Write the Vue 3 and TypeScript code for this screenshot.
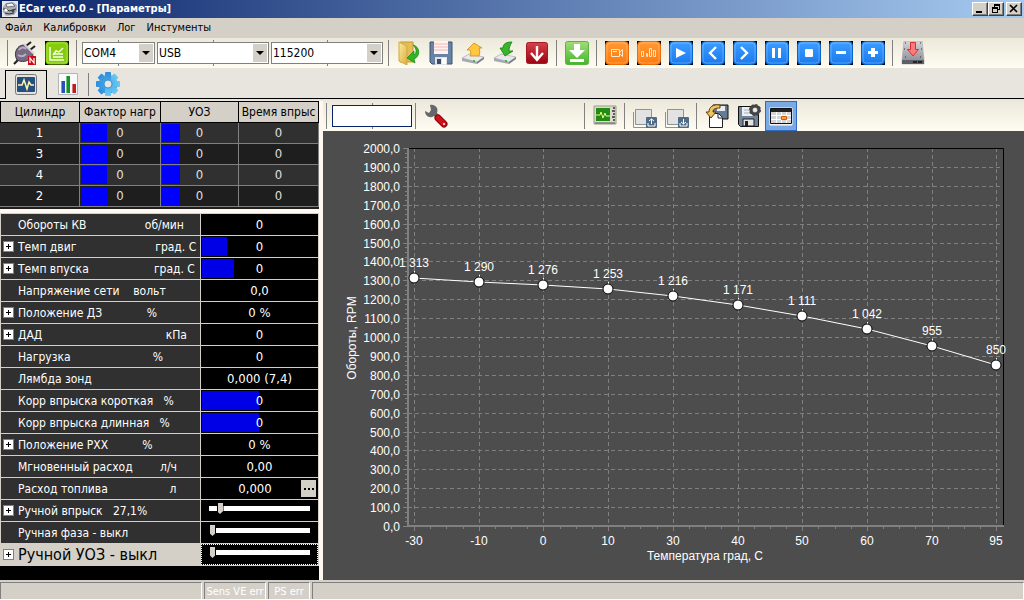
<script setup lang="ts">
import { ref } from 'vue'

interface Param {
  name: string
  expand?: boolean
  value?: string
  bar?: number
  slider?: number
  more?: boolean
}

const menu = ['Файл', 'Калибровки', 'Лог', 'Инстументы']

const port = ref('COM4')
const link = ref('USB')
const baud = ref('115200')
const query = ref('')

const cylinders = ['1', '3', '4', '2']

const params = ref<Param[]>([
  { name: 'Обороты КВ                 об/мин', value: '0' },
  { name: 'Темп двиг                       град. C', expand: true, value: '0', bar: 21 },
  { name: 'Темп впуска                   град. C', expand: true, value: '0', bar: 27 },
  { name: 'Напряжение сети    вольт', value: '0,0' },
  { name: 'Положение ДЗ             %', expand: true, value: '0 %' },
  { name: 'ДАД                                    кПа', expand: true, value: '0' },
  { name: 'Нагрузка                        %', value: '0' },
  { name: 'Лямбда зонд', value: '0,000 (7,4)' },
  { name: 'Корр впрыска короткая   %', value: '0', bar: 49 },
  { name: 'Корр впрыска длинная   %', value: '0', bar: 49 },
  { name: 'Положение РХХ          %', expand: true, value: '0 %' },
  { name: 'Мгновенный расход        л/ч', value: '0,00' },
  { name: 'Расход топлива                  л', value: '0,000', more: true },
  { name: 'Ручной впрыск   27,1%', expand: true, slider: 8 },
  { name: 'Ручная фаза - выкл', slider: 0 },
  { name: 'Ручной УОЗ - выкл', expand: true, slider: 0 },
])

/* chart geometry */
const L = 85
const R = 680
const T = 17
const B = 395
const x0 = 91
const step = 64.7
const temps = [-30, -10, 0, 10, 30, 40, 50, 60, 70, 95]
const rpm = [1313, 1290, 1276, 1253, 1216, 1171, 1111, 1042, 955, 850]
const px = (i: number) => Math.round(x0 + i * step)
const py = (v: number) => Math.round(B - (v * (B - T)) / 2000)
const levels = Array.from({ length: 21 }, (_, i) => i * 100)
const minorY = Array.from({ length: 80 }, (_, i) => i * 25)
const minorX = Array.from({ length: 37 }, (_, i) => Math.round(x0 + (i * step) / 4))
const fmt = (v: number) => (v >= 1000 ? `1 ${String(v - 1000).padStart(3, '0')}` : String(v))
const line = rpm.map((v, i) => `${px(i)},${py(v)}`).join(' ')

const media = [
  { id: 'video', label: 'Видео' },
  { id: 'stats', label: 'График' },
  { id: 'play', label: 'Пуск' },
  { id: 'prev', label: 'Назад' },
  { id: 'next', label: 'Вперёд' },
  { id: 'pause', label: 'Пауза' },
  { id: 'stop', label: 'Стоп' },
  { id: 'minus', label: 'Меньше' },
  { id: 'plus', label: 'Больше' },
]
</script>

<template>
  <div class="app">
    <svg class="defs" aria-hidden="true">
      <defs>
        <linearGradient id="gBlue" x1="0" y1="0" x2="0" y2="1"><stop offset="0" stop-color="#3e9dff" /><stop offset="1" stop-color="#187bee" /></linearGradient>
        <linearGradient id="gOrange" x1="0" y1="0" x2="0" y2="1"><stop offset="0" stop-color="#ff9a35" /><stop offset="1" stop-color="#ff7a0c" /></linearGradient>
        <linearGradient id="gGreen" x1="0" y1="0" x2="0" y2="1"><stop offset="0" stop-color="#a2dc7a" /><stop offset="1" stop-color="#45b52c" /></linearGradient>
        <linearGradient id="gRed" x1="0" y1="0" x2="0" y2="1"><stop offset="0" stop-color="#d8404a" /><stop offset="1" stop-color="#9a0310" /></linearGradient>
        <linearGradient id="gSteel" x1="0" y1="0" x2="0" y2="1"><stop offset="0" stop-color="#d5d5da" /><stop offset="1" stop-color="#85868e" /></linearGradient>
        <linearGradient id="gFolder" x1="0" y1="0" x2="1" y2="1"><stop offset="0" stop-color="#fbeaa0" /><stop offset="1" stop-color="#dcae3e" /></linearGradient>
        <linearGradient id="gSky" x1="0" y1="0" x2="0" y2="1"><stop offset="0" stop-color="#6cc8f4" /><stop offset="1" stop-color="#2b8ede" /></linearGradient>
      </defs>
    </svg>

    <header class="title">
      <svg class="logo" viewBox="0 0 16 16">
        <path d="M0 0h16v16H0z" fill="#e6e8ec" />
        <path d="M1 6 4 2l7-1 4 3v6l-3 4-8 1-3-4z" fill="#a9adb5" />
        <path d="M4 3l6-1 3 3-8 1z" fill="#f5f5f5" stroke="#555" stroke-width=".7" />
        <path d="M1 8h4l2 2 7-2M3 12l4 1 5-1" stroke="#333" fill="none" />
        <circle cx="4" cy="9" r="1.5" fill="#fff" /><circle cx="11" cy="10" r="1.5" fill="#444" />
      </svg>
      <h1>ECar ver.0.0 - [Параметры]</h1>
      <div class="win">
        <button aria-label="Свернуть"><svg viewBox="0 0 14 12"><path d="M3 8h6v2H3z" /></svg></button>
        <button aria-label="Восстановить"><svg viewBox="0 0 14 12"><path d="M5 1h6v6H9V6h1V3H6v1H5zM3 4h6v6H3zm1 2v3h4V6z" fill-rule="evenodd" /></svg></button>
        <button class="close" aria-label="Закрыть"><svg viewBox="0 0 14 12"><path d="M3 2l7 7M10 2 3 9" stroke="#000" stroke-width="1.7" /></svg></button>
      </div>
    </header>

    <nav class="menu">
      <button v-for="m in menu" :key="m">{{ m }}</button>
    </nav>

    <div class="bar">
      <i class="sep grip"></i>
      <button class="tool" aria-label="Подключение">
        <svg viewBox="0 0 24 24">
          <path d="M1 23l4-4M13 5l5-4M17 9l5-4" stroke="#262428" stroke-width="2.2" />
          <path d="M4 19C0 12 4 4 11 4l9 9c0 5-9 10-16 6z" fill="#776b83" stroke="#3c3443" />
          <path d="M6 9c2-3 5-3 7-1M5 14c3 2 6 1 8-1" stroke="#b9adc4" stroke-width="2" fill="none" />
          <path d="M11 3l10 10" stroke="#d5d0da" stroke-width="2" />
          <path d="M15 15h8v9h-8z" fill="#d20a14" />
          <path d="M17 22v-5l4 5v-5" stroke="#fff" stroke-width="1.2" fill="none" />
        </svg>
      </button>
      <button class="tool" aria-label="Графики">
        <svg viewBox="0 0 24 24">
          <path d="M0 0h24v24H0z" /><rect x=".5" y=".5" width="23" height="23" rx="4" fill="#86cc0e" />
          <rect x="2" y="2" width="20" height="20" rx="3" fill="none" stroke="#a6e03c" />
          <path d="M5 6v13h14M8 16h10M8 13h10M8 14l3-4 3 1 4-4" stroke="#f8ffe8" stroke-width="1.5" fill="none" />
        </svg>
      </button>
      <i class="sep"></i>
      <span class="combo port"><select v-model="port" aria-label="Порт"><option>COM4</option></select></span>
      <span class="combo"><select v-model="link" aria-label="Интерфейс"><option>USB</option></select></span>
      <span class="combo"><select v-model="baud" aria-label="Скорость"><option>115200</option></select></span>
      <i class="sep"></i>
      <button class="tool" aria-label="Открыть">
        <svg viewBox="0 0 24 24">
          <path d="M3 1h13v20H3z" fill="#e3bd55" stroke="#c59a31" /><path d="M2 1l8 4v19l-8-4z" fill="url(#gFolder)" stroke="#d3a93e" />
          <path d="M16 4c8 2 7 12 1 14l1 4-8-5 7-7v4c3-2 3-6-1-10z" fill="#31b522" stroke="#148512" stroke-width=".7" />
        </svg>
      </button>
      <button class="tool" aria-label="Сохранить">
        <svg viewBox="0 0 24 24">
          <path d="M1 1h22v22H3l-2-2z" fill="#6783a6" stroke="#3f546e" />
          <path d="M5 0h14v13H5z" fill="#fff2ef" /><path d="M5 3h14M5 6h14M5 9h14" stroke="#f3b8b2" />
          <path d="M6 16h12v8H6z" fill="#dfe3e8" /><path d="M8 18h4v5H8z" fill="#3c4d63" /><path d="M13 17h4v6h-4z" fill="#fff" />
        </svg>
      </button>
      <button class="tool" aria-label="Считать">
        <svg viewBox="0 0 24 24">
          <path d="M1 17l7-4 15 3-7 5z" fill="#e8e9ed" stroke="#a9abb4" stroke-width=".7" /><path d="M1 17l15 4v2L1 20z" fill="#a6a8b2" /><path d="M16 21l7-5v2l-7 5z" fill="#777a86" />
          <path d="M12 20h2" stroke="#38c22c" stroke-width="2" />
          <path d="M9 15c1-2 1-4 0-6H6l7-7 8 5h-3c1 3 1 5 0 8z" fill="#ffc73e" stroke="#c98a16" stroke-width=".8" />
        </svg>
      </button>
      <button class="tool" aria-label="Записать">
        <svg viewBox="0 0 24 24">
          <path d="M1 17l7-4 15 3-7 5z" fill="#e8e9ed" stroke="#a9abb4" stroke-width=".7" /><path d="M1 17l15 4v2L1 20z" fill="#a6a8b2" /><path d="M16 21l7-5v2l-7 5z" fill="#777a86" />
          <path d="M12 20h2" stroke="#38c22c" stroke-width="2" />
          <path d="M19 1c-6 0-9 2-9 6H7l5 8 8-5h-4c0-3 1-6 3-9z" fill="#38b52b" stroke="#147f13" stroke-width=".8" />
        </svg>
      </button>
      <button class="tool" aria-label="Загрузить">
        <svg viewBox="0 0 24 24"><rect x="1.500" y="1.500" width="21" height="21" rx="2" fill="url(#gRed)" stroke="#a51824" /><path d="M12 5v14M6 12l6 7 6-7" stroke="#fff" stroke-width="2.400" fill="none" /></svg>
      </button>
      <i class="sep"></i>
      <button class="tool" aria-label="Скачать">
        <svg viewBox="0 0 24 24"><rect x=".5" y=".5" width="23" height="23" rx="2" fill="url(#gGreen)" stroke="#55b53c" /><path d="M9 3h6v6h5l-8 8-8-8h5zM5 18h14v3H5z" fill="#fff" /></svg>
      </button>
      <i class="sep"></i>
      <button v-for="m in media" :key="m.id" class="tool" :aria-label="m.label">
        <svg viewBox="0 0 24 24">
          <path d="M0 0h24v24H0z" />
          <rect x=".5" y=".5" width="23" height="23" rx="4" :fill="m.id === 'video' || m.id === 'stats' ? 'url(#gOrange)' : 'url(#gBlue)'" :stroke="m.id === 'video' || m.id === 'stats' ? '#ee6c08' : '#0c63c8'" />
          <rect x="2" y="2" width="20" height="20" rx="3" fill="none" stroke="#fff" stroke-opacity=".25" />
          <path v-if="m.id === 'video'" d="M6.500 8.500h8v7h-8zM14.500 11.500l3-3v7l-3-3M8 10.500h4" stroke="#ffe9d0" fill="none" />
          <path v-else-if="m.id === 'stats'" d="M4.500 15.500v-5h2v5zM9.500 15.500v-3h1v3zM12.500 15.500v-8h2v8zM18.500 9.500h-2v6h2z" stroke="#ffe1c0" fill="none" />
          <path v-else-if="m.id === 'play'" d="M7 7l10 5-10 5z" fill="#fff" />
          <path v-else-if="m.id === 'prev'" d="M15 6l-6 6 6 6" stroke="#fff" stroke-width="2.4" fill="none" />
          <path v-else-if="m.id === 'next'" d="M8 6l6 6-6 6" stroke="#fff" stroke-width="2.4" fill="none" />
          <path v-else-if="m.id === 'pause'" d="M7 7h3v10H7zM13 7h3v10h-3z" fill="#fff" />
          <rect v-else-if="m.id === 'stop'" x="8" y="8" width="8" height="8" rx="1" fill="#fff" />
          <path v-else-if="m.id === 'minus'" d="M7 10h10v3H7z" fill="#fff" />
          <path v-else d="M7 10h3V7h4v3h3v3h-3v3h-4v-3H7z" fill="#fff" />
        </svg>
      </button>
      <i class="sep"></i>
      <button class="tool" aria-label="Запись во флеш">
        <svg viewBox="0 0 24 24">
          <path d="M3 0h18l2 19v4H1v-4z" fill="url(#gSteel)" stroke="#a4a4a8" stroke-width=".6" /><path d="M1 19h22v4H1z" fill="#5d5f68" />
          <path d="M12 21h9" stroke="#111" stroke-width="1.500" stroke-dasharray="4 1" /><path d="M3 8h1M20 8h1M4 16h1M19 16h1M4 2h1M19 2h1" stroke="#333" />
          <path d="M9.500 1.500h5v7h3l-5.500 6.500-5.500-6.500h3z" fill="#ff7a7a" stroke="#d83030" />
        </svg>
      </button>
    </div>

    <div class="tabs">
      <button class="tab on" aria-label="Параметры">
        <svg viewBox="0 0 22 22"><rect x=".5" y=".5" width="21" height="20" rx="2" fill="#e2e2de" stroke="#777" /><rect x="2" y="3" width="18" height="15" rx="1" fill="#244f7e" /><path d="M3 11h4l2-5 3 9 2-7 2 3h3" stroke="#fff7b0" stroke-width="1.500" fill="none" /></svg>
      </button>
      <button class="tab" aria-label="Диаграмма">
        <svg viewBox="0 0 22 22"><path d="M1.500.5h19v21h-19z" fill="#fafafa" stroke="#b4b4b4" /><path d="M4 8h4v12H4z" fill="#2852b8" /><path d="M9 3h4v17H9z" fill="#159326" /><path d="M15 11h4v9h-4z" fill="#c01c24" /><path d="M4 8h1v12H4zM9 3h1v17H9zM15 11h1v9h-1z" fill="#fff" opacity=".4" /></svg>
      </button>
      <i class="sep"></i>
      <button class="tab gear" aria-label="Настройки">
        <svg viewBox="0 0 24 24">
          <g fill="url(#gSky)"><circle cx="12" cy="12" r="9.500" /><rect v-for="a in 4" :key="a" x="9" y="0" width="6" height="24" rx="1" :transform="`rotate(${a * 45} 12 12)`" /></g>
          <circle cx="12" cy="12" r="4" fill="#e4e7e8" stroke="#2b80bb" stroke-width=".8" />
        </svg>
      </button>
    </div>

    <main class="work">
      <section class="left">
        <table class="cyl">
          <thead>
            <tr><th>Цилиндр</th><th>Фактор нагр</th><th>УОЗ</th><th>Время впрыс</th></tr>
          </thead>
          <tbody>
            <tr v-for="c in cylinders" :key="c">
              <td>{{ c }}</td>
              <td><i class="fill wide"></i><span>0</span></td>
              <td><i class="fill"></i><span>0</span></td>
              <td><span>0</span></td>
            </tr>
          </tbody>
        </table>

        <div class="grid">
          <table class="params">
            <tbody>
              <tr v-for="(p, i) in params" :key="i" :class="{ sel: i === params.length - 1 }">
                <th scope="row">
                  <div class="name">
                    <span class="slot"><button v-if="p.expand" class="exp" :aria-label="'Развернуть ' + p.name.trim()"></button></span>
                    <label :for="p.slider !== undefined ? 'p' + i : undefined">{{ p.name }}</label>
                  </div>
                </th>
                <td>
                  <div class="val">
                    <i v-if="p.bar" class="meter" :style="{ width: p.bar + '%' }"></i>
                    <input v-if="p.slider !== undefined" :id="'p' + i" v-model.number="p.slider" type="range" min="0" max="100" />
                    <span v-else class="num">{{ p.value }}</span>
                    <button v-if="p.more" class="more" aria-label="Подробнее"></button>
                  </div>
                </td>
              </tr>
            </tbody>
          </table>
        </div>
      </section>

      <section class="right">
        <div class="bar sub">
          <i class="sep edge"></i>
          <span class="field"><input v-model="query" type="text" aria-label="Значение" /></span>
          <i class="sep"></i>
          <button class="tool" aria-label="Инструмент">
            <svg viewBox="0 0 24 24">
              <path d="M6 1l1 5-2 3-4-2c0 5 5 8 9 5l3 3 3-3-3-3c2-5-2-9-7-8z" fill="#66676a" />
              <path d="M14 14l6 6" stroke="#8c0008" stroke-width="7" stroke-linecap="round" /><path d="M14 14l6 6" stroke="#d0101a" stroke-width="5" stroke-linecap="round" /><circle cx="20" cy="20" r="1" fill="#fff" />
            </svg>
          </button>
          <i class="sep far"></i>
          <button class="tool" aria-label="Осциллограф">
            <svg viewBox="0 0 24 24"><path d="M1 2h22v18H1z" fill="#d9dccb" stroke="#999c8c" /><path d="M3 4h14v13H3z" fill="#248a16" /><path d="M3 11h4l1-3 2 6 2-5 1 3h4" stroke="#e0ff80" fill="none" /><path d="M20 4h2M19 7h3M20 10h2M19 13h3M20 16h2" stroke="#333" stroke-width="1.600" /><path d="M2 19h20" stroke="#555" /></svg>
          </button>
          <i class="sep"></i>
          <button v-for="d in ['up', 'down']" :key="d" class="tool" :aria-label="d === 'up' ? 'Выгрузить' : 'Принять'">
            <svg viewBox="0 0 24 24">
              <path d="M.5 8v15.500H14" stroke="#8b9298" fill="none" /><path d="M2.500 5.500h16v15h-16z" fill="#e2e2e2" stroke="#8b9298" />
              <rect x="13" y="13" width="11" height="11" rx="1" fill="#506c84" /><path d="M15 19v3h7v-3" stroke="#fff" fill="none" />
              <path :d="d === 'up' ? 'M18.500 20v-5M16 17l2.500-2 2.500 2' : 'M18.500 15v5M16 18l2.500 2 2.500-2'" stroke="#fff" fill="none" />
            </svg>
          </button>
          <i class="sep"></i>
          <button class="tool" aria-label="Загрузить файл">
            <svg viewBox="0 0 24 24"><path d="M8 1h15v14H8z" fill="#667c93" stroke="#111" /><path d="M12 2h8v5h-8z" fill="#e9edf2" /><path d="M4.500 9.500h9l4 4v10h-13z" fill="#fff" stroke="#222" /><path d="M13 10v4h4" stroke="#222" fill="none" /><path d="M15 1C8 0 4 3 4 8H1l5 6 5-6H8c0-3 2-4 7-4z" fill="#f0c463" stroke="#5b3c08" /></svg>
          </button>
          <button class="tool" aria-label="Сохранить файл">
            <svg viewBox="0 0 24 24"><path d="M1.500 2.500h20v20h-18l-2-2z" fill="#71869a" stroke="#111" /><path d="M5 3h13v9H5z" fill="#edf0f3" /><path d="M7 6h8M7 9h8" stroke="#a7b0b8" /><path d="M6 15h11v7H6z" fill="#e4e4e4" stroke="#222" /><path d="M8 17h3v5H8z" fill="#222" /><circle cx="18" cy="6" r="4" fill="#aaa" stroke="#444" stroke-width="3" /><circle cx="18" cy="6" r="5" fill="none" stroke="#444" stroke-width="2" stroke-dasharray="2 1.900" /><circle cx="18" cy="6" r="2" fill="#eee" /></svg>
          </button>
          <button class="tool pressed" aria-label="Таблица">
            <svg viewBox="0 0 24 24"><path d="M1 4h22v17H1z" fill="#e6e6e6" stroke="#fff" /><path d="M1.500 4.500h21v15h-21z" fill="#d5d5d5" stroke="#111" /><path d="M2 5h20v3H2z" fill="#222" /><path d="M2 11.500h20M2 15.500h20M7.500 8v11M12.500 8v11M17.500 8v11" stroke="#fff" /><path d="M12.500 12.500h5v3h-5z" fill="#ffa23c" stroke="#d05a0c" /></svg>
          </button>
        </div>

        <svg class="chart" viewBox="0 0 701 449" role="img" aria-label="Обороты от температуры">
          <g class="gridlines">
            <line v-for="v in levels.slice(1, 20)" :key="'h' + v" :x1="L" :x2="R" :y1="py(v) + 0.5" :y2="py(v) + 0.5" />
            <line v-for="(t, i) in temps" :key="'v' + t" :x1="px(i) + 0.5" :x2="px(i) + 0.5" :y1="T" :y2="B" />
          </g>
          <path :d="`M${L} ${T + 0.5}H${R + 0.5}V${B}`" stroke="#000" fill="none" />
          <path :d="`M${L} ${T}V${B + 1}M${L - 1} ${B}H${R + 1}`" stroke="#808080" stroke-width="2" fill="none" />
          <g stroke="#808080">
            <line v-for="v in levels" :key="'a' + v" :x1="L - 5" :x2="L" :y1="py(v) + 0.5" :y2="py(v) + 0.5" />
            <line v-for="v in minorY" :key="'m' + v" :x1="L - 3" :x2="L" :y1="py(v) + 0.5" :y2="py(v) + 0.5" />
            <line v-for="x in minorX" :key="'n' + x" :x1="x + 0.5" :x2="x + 0.5" :y1="B" :y2="B + 3" />
            <line v-for="(t, i) in temps" :key="'b' + t" :x1="px(i) + 0.5" :x2="px(i) + 0.5" :y1="B" :y2="B + 5" />
          </g>
          <g class="lbl">
            <text v-for="v in levels" :key="'y' + v" x="77" :y="py(v) + 5" text-anchor="end">{{ v }},0</text>
            <text v-for="(t, i) in temps" :key="'x' + t" :x="px(i)" y="414" text-anchor="middle">{{ t }}</text>
            <text x="382" y="429" text-anchor="middle">Температура град, C</text>
            <text transform="translate(33 207) rotate(-90)" text-anchor="middle">Обороты, RPM</text>
            <text v-for="(v, i) in rpm" :key="'r' + v" :x="px(i)" :y="py(v) - 11" text-anchor="middle">{{ fmt(v) }}</text>
          </g>
          <polyline :points="line" fill="none" stroke="#fff" />
          <g v-for="(v, i) in rpm" :key="'d' + v">
            <line :x1="px(i) + 0.5" :x2="px(i) + 0.5" :y1="py(v) - 7" :y2="py(v)" stroke="#fff" />
            <circle :cx="px(i)" :cy="py(v)" r="5" fill="#fff" stroke="#000" />
          </g>
        </svg>
      </section>
    </main>

    <footer class="status">
      <span class="cell a"></span><span class="cell b">Sens VE err</span><span class="cell c">PS err</span><span class="cell d"></span>
    </footer>
  </div>
</template>

<style>
html { background: #d4d0c8; }
</style>

<style scoped>
* { box-sizing: border-box; }
.app { display: flex; flex-direction: column; min-height: 100vh; background: #e8e4de; color: #000; font-family: 'DejaVu Sans Condensed', 'DejaVu Sans', sans-serif; font-size: 12px; line-height: 14px; overflow: hidden; }
.defs { width: 0; height: 0; position: absolute; }
button { padding: 0; border: 0; background: none; font: inherit; color: inherit; }
svg { display: block; }

.title { display: flex; align-items: center; height: 18px; padding: 0 2px; background: linear-gradient(90deg, #0a246a, #a6caf0); color: #fff; }
.logo { width: 16px; height: 16px; margin-right: 1px; }
h1 { flex: 1; margin: 0; font-size: 11px; line-height: 16px; font-weight: bold; }
.win { display: flex; }
.win button { width: 16px; height: 14px; background: #d4d0c8; border: 1px solid; border-color: #fff #404040 #404040 #fff; box-shadow: inset -1px -1px #808080; }
.win .close { margin-left: 2px; }
.win svg { width: 14px; height: 12px; }

.menu { display: flex; gap: 11px; height: 20px; padding: 0 5px; align-items: center; background: #d4d0c8; font-size: 11px; }

.bar { display: flex; align-items: center; height: 30px; padding-left: 4px; background: linear-gradient(#ece8da, #fffcf2); }
.sep { flex: none; width: 1px; height: 26px; margin: 0 4px 0 3px; background: #808080; }
.grip { margin-right: 1px; }
.tool { flex: none; display: grid; place-items: center; width: 32px; height: 30px; }
.tool svg { width: 24px; height: 24px; }
.combo { position: relative; flex: none; display: flex; align-items: center; width: 112px; height: 26px; margin-right: 2px; background: linear-gradient(#808080, #808080) center / 1px 100% no-repeat; }
.port { width: 73px; margin-left: 1px; }
select { appearance: none; width: 100%; height: 22px; padding: 0 16px 0 1px; border: 1px solid #808080; border-radius: 0; background: #fff; color: #000; font: inherit; }
.combo::before { content: ''; position: absolute; right: 2px; top: 4px; width: 14px; height: 18px; background: #d4d0c8; pointer-events: none; }
.combo::after { content: ''; position: absolute; right: 5px; top: 11px; border: 4px solid transparent; border-top-color: #000; border-bottom: 0; pointer-events: none; }

.tabs { display: flex; align-items: flex-end; height: 31px; padding-left: 5px; border-bottom: 1px solid #000; background: #e8e4de; }
.tab { display: grid; place-items: center; width: 41px; height: 28px; }
.tab svg { width: 22px; height: 22px; }
.tab.on { width: 42px; border: 1px solid #000; border-bottom: 0; margin-bottom: -1px; height: 29px; background: #e8e4de; }
.tabs .sep { margin: 0 1px 2px 0; height: 23px; }
.gear { width: 36px; }
.gear svg { width: 24px; height: 24px; }

.work { flex: 1; display: flex; padding-top: 2px; }
.left { flex: none; display: flex; flex-direction: column; width: 323px; background: #fff8f0; padding-right: 4px; }
table { width: 100%; border-collapse: separate; border-spacing: 0; table-layout: fixed; }
th, td { padding: 0; font-weight: normal; }
.cyl { border-bottom: 2px solid #1e1e1e; color: #fff; text-align: center; }
.cyl th { height: 22px; border: solid #000; border-width: 1px 1px 1px 0; background: #d4d0c8; color: #000; overflow: hidden; white-space: nowrap; }
.cyl th:first-child { width: 80px; border-left-width: 1px; }
.cyl th:nth-child(2) { width: 81px; }
.cyl th:nth-child(3) { width: 78px; }
.cyl td { position: relative; height: 21px; border: solid #808080; border-width: 0 1px 1px 0; background: #303030; font-size: 13px; }
.cyl tr:nth-child(even) td { background: #1e1e1e; }
.cyl td span { opacity: .85; }
.fill { position: absolute; left: 1px; top: 1px; bottom: 1px; width: 18px; background: #00f; }
.fill.wide { width: 26px; }

.grid { flex: 1; margin-top: 4px; background: #000; }
.params { border-right: 1px solid #d4d0c8; border-bottom: 1px solid #d4d0c8; color: #fff; }
.params th { width: 201px; border: solid #d4d0c8; border-width: 1px 1px 0 1px; background: #303030; text-align: left; }
.params td { border-top: 1px solid #d4d0c8; background: #000; font-size: 13px; }
.name { display: flex; align-items: center; height: 21px; white-space: pre; overflow: hidden; }
.slot { flex: none; width: 17px; padding-left: 2px; }
.exp { display: block; width: 11px; height: 11px; border: 1px solid #808080; background: linear-gradient(#000, #000) center / 5px 1px no-repeat, linear-gradient(#000, #000) center / 1px 5px no-repeat, #fff; }
.val { position: relative; display: flex; align-items: center; height: 21px; padding: 0 8px; }
.meter { position: absolute; left: 1px; top: 1px; bottom: 1px; background: #0000e6; }
.num { position: relative; flex: 1; text-align: center; }
.more { width: 15px; height: 17px; margin-right: -6px; background: linear-gradient(90deg, #000 2px, transparent 2px 4px, #000 4px 6px, transparent 6px 8px, #000 8px) center / 10px 2px no-repeat, #d4d0c8; }
.sel th { background: #d4d0c8; color: #000; font-size: 16px; }
.sel .val { outline: 1px dotted #fff; outline-offset: -1px; }
input[type='range'] { appearance: none; width: 100%; height: 11px; margin: 0 0 4px; background: linear-gradient(#fff, #fff) center / 100% 5px no-repeat; }
input[type='range']::-webkit-slider-thumb { appearance: none; width: 7px; height: 11px; background: linear-gradient(90deg, #000 1px, #d4d0c8 1px 6px, #000 6px); clip-path: polygon(0 0, 100% 0, 100% 70%, 50% 100%, 0 70%); }

.right { flex: 1; min-width: 0; background: #4d4d4d; }
.sub { padding-left: 0; }
.edge { margin-right: 5px; }
.field { display: flex; align-items: center; width: 80px; height: 26px; background: linear-gradient(#808080, #808080) center / 1px 100% no-repeat; }
.field input { width: 100%; height: 22px; padding: 0 2px; border: 1px solid #0a246a; background: #fff; font: inherit; }
.far { margin-left: 132px; }
.pressed { background: #7ba9e4; border: 1px solid #316ac5; }
.chart { width: 100%; }
.gridlines { stroke: #808080; stroke-dasharray: 4 3; }
.lbl { fill: #fff; font-family: 'Liberation Sans', Arial, sans-serif; font-size: 12px; }

.status { display: flex; gap: 2px; height: 20px; padding-top: 2px; background: #d4d0c8; color: #fff; font-size: 11px; border-bottom: 1px solid #fff; }
.cell { border: 1px solid #808080; border-right-color: #fff; border-bottom: 0; text-align: center; line-height: 17px; white-space: nowrap; }
.a { width: 202px; }
.b { width: 62px; }
.c { width: 42px; }
.d { flex: 1; }
</style>
